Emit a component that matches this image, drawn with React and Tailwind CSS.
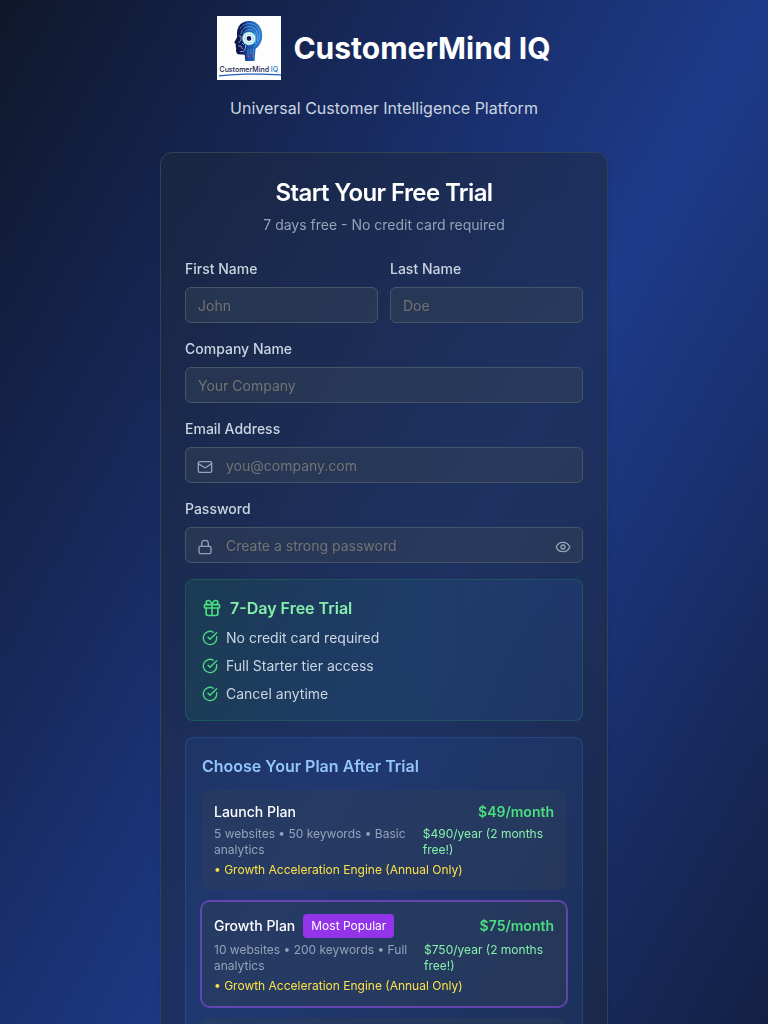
import { useState } from "react";
import { CircleCheckBig, Eye, EyeOff, Gift, Lock, Mail } from "lucide-react";

const perks = ["No credit card required", "Full Starter tier access", "Cancel anytime"];

const plans = [
  {
    name: "Launch Plan",
    price: "$49/month",
    details: "5 websites • 50 keywords • Basic analytics",
    yearly: "$490/year (2 months free!)",
  },
  {
    name: "Growth Plan",
    price: "$75/month",
    details: "10 websites • 200 keywords • Full analytics",
    yearly: "$750/year (2 months free!)",
    popular: true,
  },
];

function Logo() {
  return (
    <svg viewBox="0 0 64 64" className="size-16 shrink-0" role="img" aria-label="CustomerMind IQ logo">
      <defs>
        <linearGradient id="head" x1="0" y1="0" x2="1" y2="0">
          <stop offset="0" stopColor="#0a1240" />
          <stop offset="0.3" stopColor="#101c5c" />
          <stop offset="0.5" stopColor="#1a50a8" />
          <stop offset="1" stopColor="#2b7fd4" />
        </linearGradient>
      </defs>
      <rect width="64" height="64" fill="#fdfdfe" />
      <path
        d="M32 5C24.500 5 20.500 10 20 16.500C20 19 20.300 20.500 19.700 22L17.200 26.500C17 27.300 18.800 27.600 18.900 28.400L18.600 30.500L19.300 32L18.900 33.500C19.200 35 19 36.500 20.500 38C23 39 26 38 27.700 39L28.300 45H37.500L38.500 33C42.500 30 45.200 25.500 45.200 19.500C45.200 10.500 39.500 5 32 5Z"
        fill="url(#head)"
      />
      <g fill="none" strokeWidth="0.7">
        <path d="M23 13C25 9 29 7.500 33 7.700C39 8 42.700 12.500 42.800 18.500C42.800 24 40.500 28 37 31" stroke="#5fb0e8" />
        <path d="M24 18C25 13 28 10.500 32.500 10.700C37.500 11 40.300 14.500 40.300 19.500V25" stroke="#7cc8f0" />
        <path d="M26 20C26.500 16 29 13.500 32.500 13.500C36.500 13.500 38.500 17 38.500 21V28" stroke="#63c8e0" />
        <path d="M21.500 20H24V24L21.500 27M21 30H24L25.500 33M23 35.500H26.500L28.500 32V29M25 27L27 29" stroke="#b9c4e2" />
        <path d="M31 33V41M34 33V38M36.500 32V42" stroke="#5e8fd8" />
      </g>
      <circle cx="32" cy="22.500" r="7" fill="#40b7d3" />
      <circle cx="32" cy="22.500" r="6.200" fill="#eefafa" />
      <circle cx="32" cy="22.500" r="4.600" fill="#59b7c9" />
      <circle cx="32" cy="22.500" r="3.900" fill="#f7fdff" />
      <circle cx="32" cy="22.500" r="2.400" fill="#101a5e" />
      <circle cx="31.500" cy="40.500" r="0.900" fill="#d93a68" />
      <circle cx="34.500" cy="38.500" r="0.700" fill="#b53a7a" />
      <text x="2.500" y="56" fontSize="7" fontFamily="Inter, sans-serif" fontWeight="500" fill="#14204f">
        CustomerMind <tspan fill="#2878d0">IQ</tspan>
      </text>
      <path d="M2 59.200C20 57 44 57 64 58.200V59.600C44 58.300 20 58.300 2 60.600Z" fill="#1c5fc0" />
    </svg>
  );
}

const inputClass =
  "h-9 w-full min-w-0 rounded-md border border-[#475569] bg-[#334155]/50 text-sm text-white outline-none placeholder:text-[#737373] focus:border-[#60a5fa]";

function Field({ id, label, icon: Icon, action, ...props }) {
  return (
    <div className="flex min-w-0 flex-col gap-2">
      <label htmlFor={id} className="text-sm font-medium text-[#cbd5e1]">
        {label}
      </label>
      <div className="relative flex">
        {Icon && <Icon className="pointer-events-none absolute top-3 left-3 size-4 text-[#94a3b8]" aria-hidden="true" />}
        <input id={id} className={`${inputClass} ${Icon ? "px-10" : "px-3"}`} {...props} />
        {action}
      </div>
    </div>
  );
}

function Plan({ plan }) {
  return (
    <article className={`rounded-lg bg-[#334155]/40 p-3 ${plan.popular ? "ring-2 ring-[#a855f7]/50" : ""}`}>
      <div className="flex items-center justify-between text-sm">
        <div className="flex items-center gap-2">
          <h4 className="font-medium text-white">{plan.name}</h4>
          {plan.popular && <span className="rounded bg-[#9333ea] px-2 py-1 text-xs text-white">Most Popular</span>}
        </div>
        <span className="font-semibold text-[#4ade80]">{plan.price}</span>
      </div>
      <div className="mt-1 flex justify-between text-xs">
        <span className="text-[#94a3b8]">{plan.details}</span>
        <span className="text-[#86efac]">{plan.yearly}</span>
      </div>
      <p className="mt-1 text-xs text-[#fde047]">• Growth Acceleration Engine (Annual Only)</p>
    </article>
  );
}

export default function App() {
  const [shown, setShown] = useState(false);
  return (
    <div className="flex min-h-[1400px] justify-center bg-[linear-gradient(to_bottom_right,#0f172a,#1e3a8a,#0f172a)] p-4 font-[Inter,sans-serif]">
      <main className="flex w-full max-w-md flex-col">
        <header className="mb-8 text-center">
          <div className="mb-4 flex items-center justify-center gap-3">
            <Logo />
            <h1 className="text-3xl font-bold text-white">CustomerMind IQ</h1>
          </div>
          <p className="text-[#cbd5e1]">Universal Customer Intelligence Platform</p>
        </header>

        <section className="grow rounded-xl border border-[#334155] bg-[#1e293b]/50 p-6 shadow-sm backdrop-blur-xl">
          <div className="mb-6 flex flex-col gap-1.5 text-center">
            <h2 className="text-2xl font-semibold tracking-tight text-white">Start Your Free Trial</h2>
            <p className="text-sm text-[#94a3b8]">7 days free - No credit card required</p>
          </div>

          <form className="flex flex-col gap-4" onSubmit={(e) => e.preventDefault()}>
            <div className="grid grid-cols-2 gap-3">
              <Field id="first-name" label="First Name" placeholder="John" />
              <Field id="last-name" label="Last Name" placeholder="Doe" />
            </div>
            <Field id="company" label="Company Name" placeholder="Your Company" />
            <Field id="email" label="Email Address" type="email" icon={Mail} placeholder="you@company.com" />
            <Field
              id="password"
              label="Password"
              type={shown ? "text" : "password"}
              icon={Lock}
              placeholder="Create a strong password"
              action={
                <button
                  type="button"
                  aria-label={shown ? "Hide password" : "Show password"}
                  onClick={() => setShown(!shown)}
                  className="absolute top-3 right-3 text-[#94a3b8]"
                >
                  {shown ? <EyeOff className="size-4" /> : <Eye className="size-4" />}
                </button>
              }
            />

            <section className="rounded-lg border border-[#22c55e]/20 bg-[linear-gradient(to_right,#22c55e1a,#3b82f61a)] p-4">
              <h3 className="mb-2 flex items-center gap-2 font-semibold text-[#86efac]">
                <Gift className="size-5 text-[#4ade80]" aria-hidden="true" />
                7-Day Free Trial
              </h3>
              <ul className="flex flex-col gap-2 text-sm text-[#cbd5e1]">
                {perks.map((perk) => (
                  <li key={perk} className="flex items-center gap-2">
                    <CircleCheckBig className="size-4 text-[#4ade80]" aria-hidden="true" />
                    {perk}
                  </li>
                ))}
              </ul>
            </section>

            <section className="rounded-lg border border-[#3b82f6]/20 bg-[#3b82f6]/10 p-4">
              <h3 className="mb-3 font-semibold text-[#93c5fd]">Choose Your Plan After Trial</h3>
              <div className="flex flex-col gap-3">
                {plans.map((plan) => (
                  <Plan key={plan.name} plan={plan} />
                ))}
                <div className="h-28 rounded-lg bg-[#334155]/40" aria-hidden="true" />
              </div>
            </section>
          </form>
        </section>
      </main>
    </div>
  );
}
